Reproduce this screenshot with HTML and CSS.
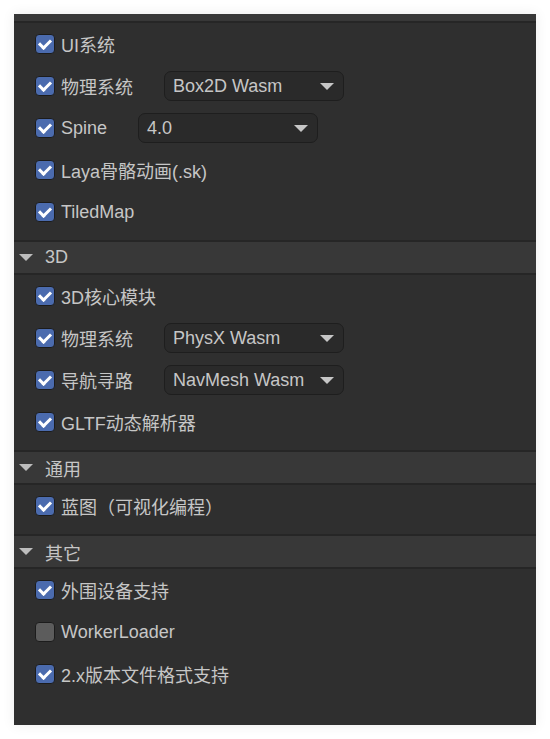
FILE: index.html
```html
<!DOCTYPE html>
<html lang="zh">
<head>
<meta charset="utf-8">
<link rel="stylesheet" href="styles.css">
</head>
<body>
<div class="panel">
  <div class="topbar"></div>
  <div class="section-body">
    <div class="row"><span class="cb on"></span><span class="label">UI系统</span></div>
    <div class="row"><span class="cb on"></span><span class="label">物理系统</span><div class="select w180">Box2D Wasm</div></div>
    <div class="row"><span class="cb on"></span><span class="label">Spine</span><div class="select w180">4.0</div></div>
    <div class="row"><span class="cb on"></span><span class="label">Laya骨骼动画(.sk)</span></div>
    <div class="row"><span class="cb on"></span><span class="label">TiledMap</span></div>
  </div>
  <div class="header"><span class="tri"></span><span class="htext">3D</span></div>
  <div class="section-body">
    <div class="row"><span class="cb on"></span><span class="label">3D核心模块</span></div>
    <div class="row"><span class="cb on"></span><span class="label">物理系统</span><div class="select w180">PhysX Wasm</div></div>
    <div class="row"><span class="cb on"></span><span class="label">导航寻路</span><div class="select w180">NavMesh Wasm</div></div>
    <div class="row"><span class="cb on"></span><span class="label">GLTF动态解析器</span></div>
  </div>
  <div class="header"><span class="tri"></span><span class="htext">通用</span></div>
  <div class="section-body">
    <div class="row"><span class="cb on"></span><span class="label">蓝图（可视化编程）</span></div>
  </div>
  <div class="header"><span class="tri"></span><span class="htext">其它</span></div>
  <div class="section-body last">
    <div class="row"><span class="cb on"></span><span class="label">外围设备支持</span></div>
    <div class="row"><span class="cb"></span><span class="label">WorkerLoader</span></div>
    <div class="row"><span class="cb on"></span><span class="label">2.x版本文件格式支持</span></div>
  </div>
</div>
</body>
</html>
```

FILE: styles.css
```css
html, body {
  margin: 0;
  padding: 0;
  background: #ffffff;
}
body {
  padding: 14px;
  font-family: "Liberation Sans", "Noto Sans CJK SC", sans-serif;
  font-size: 18px;
  color: #c6c6c6;
}
.panel {
  width: 522px;
  height: 711px;
  background: #2f2f2f;
  box-shadow: 0 0 12px rgba(0, 0, 0, 0.08);
  display: flex;
  flex-direction: column;
}
.topbar {
  height: 7px;
  background: #383838;
  border-bottom: 2px solid #262626;
}
.section-body {
  padding-bottom: 7px;
  display: flex;
  flex-direction: column;
}
.section-body.last {
  padding-bottom: 0;
}
.row {
  height: 42px;
  display: flex;
  align-items: center;
  padding-left: 21px;
}
.cb {
  width: 18px;
  height: 18px;
  border: 1px solid #1c1c1c;
  border-radius: 4px;
  background: #5c5c5c;
  box-sizing: content-box;
  position: relative;
  flex: none;
}
.cb.on {
  background: #4b6bae;
}
.cb.on::after {
  content: "";
  position: absolute;
  left: 4px;
  top: 3px;
  width: 9px;
  height: 5px;
  border-left: 3px solid #ffffff;
  border-bottom: 3px solid #ffffff;
  transform: rotate(-45deg);
  transform-origin: center;
  top: 4px;
  left: 3px;
}
.label {
  margin-left: 6px;
  white-space: nowrap;
}
.select {
  margin-left: 31px;
  height: 28px;
  border: 1px solid #1e1e1e;
  border-radius: 7px;
  background: #2a2a2a;
  box-sizing: content-box;
  display: flex;
  align-items: center;
  padding-left: 8px;
  position: relative;
  white-space: nowrap;
}
.w180 {
  width: 170px;
}
.select::after {
  content: "";
  position: absolute;
  right: 9px;
  top: 11px;
  border-left: 7px solid transparent;
  border-right: 7px solid transparent;
  border-top: 7px solid #c6c6c6;
}
.header {
  height: 31px;
  background: #383838;
  border-top: 2px solid #262626;
  border-bottom: 2px solid #262626;
  display: flex;
  align-items: center;
  padding-left: 5px;
}
.tri {
  width: 0;
  height: 0;
  border-left: 7px solid transparent;
  border-right: 7px solid transparent;
  border-top: 7px solid #bdbdbd;
}
.htext {
  margin-left: 12px;
}
```
